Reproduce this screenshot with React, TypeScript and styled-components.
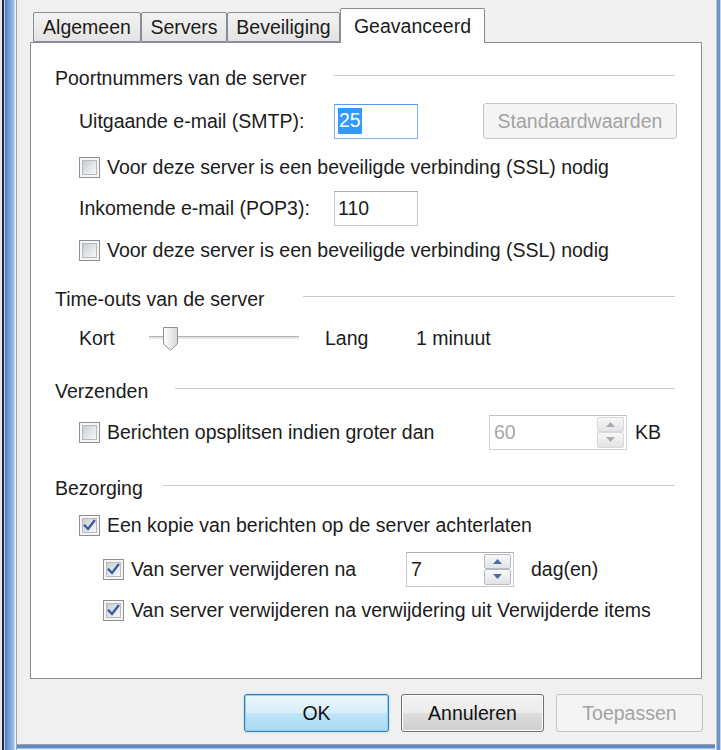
import React from "react";
import styled, { createGlobalStyle } from "styled-components";

const GlobalStyle = createGlobalStyle`
    html, body {
        margin: 0;
        padding: 0;
    }
    body {
        width: 721px;
        height: 750px;
        overflow: hidden;
        background: #f0f0f0;
        font-family: "Liberation Sans", Arial, sans-serif;
    }
`;

const Frame = styled.div`
    display: flex;
    width: 721px;
    height: 750px;
    color: #1b1b1b;
    font-size: 19.5px;
`;

const LeftEdge = styled.div`
    width: 17px;
    flex: none;
    background: linear-gradient(
        to right,
        #e4e8ee 0 2px,
        #23272e 2px 4px,
        #c4d6ee 4px 5px,
        #4f7fc7 5px,
        #a3c1e8 14px,
        #eef2f6 15px 16px,
        #9aa3ad 16px 17px
    );
`;

const RightEdge = styled.div`
    width: 6px;
    flex: none;
    background: linear-gradient(to right, #f7f7f7 0 1px, #b4c0d0 1px 2px, #6f93c8 2px 5px, #c8d6ea 5px);
`;

const Body = styled.div`
    flex: 1;
    display: flex;
    flex-direction: column;
`;

const Dialog = styled.div`
    flex: 1;
    background: #f0f0f0;
    padding: 8px 13px 0;
    display: flex;
    flex-direction: column;
`;

const BottomEdge = styled.div`
    height: 6px;
    flex: none;
    background: linear-gradient(to bottom, #9aa3ad 0 1px, #5f88c6 1px 4px, #a9c2e4 4px 5px, #e6ebf1 5px);
`;

const TabStrip = styled.div`
    display: flex;
    align-items: flex-end;
    height: 34px;
    padding-left: 3px;
    position: relative;
    z-index: 1;
`;

const Tab = styled.div<{ $active?: boolean; $w: number }>`
    width: ${(p) => p.$w}px;
    height: ${(p) => (p.$active ? 35 : 30)}px;
    margin-bottom: ${(p) => (p.$active ? -1 : 0)}px;
    box-sizing: border-box;
    display: flex;
    align-items: center;
    justify-content: center;
    border: 1px solid #898c95;
    border-bottom: ${(p) => (p.$active ? "none" : "1px solid #898c95")};
    border-radius: 2px 2px 0 0;
    background: ${(p) => (p.$active ? "#ffffff" : "linear-gradient(#f3f3f3, #e3e3e3)")};
`;

const Panel = styled.div`
    height: 637px;
    box-sizing: border-box;
    border: 1px solid #898c95;
    background: #ffffff;
    padding: 18px 26px 0 24px;
    display: flex;
    flex-direction: column;
`;

const Row = styled.div<{ $mt?: number; $indent?: number }>`
    display: flex;
    align-items: center;
    height: 34px;
    flex: none;
    margin-top: ${(p) => p.$mt ?? 0}px;
    padding-left: ${(p) => p.$indent ?? 0}px;
    white-space: nowrap;
`;

const HeadingLine = styled.div<{ $gap: number }>`
    flex: 1;
    height: 0;
    border-top: 1px solid #c8cbcf;
    margin-left: ${(p) => p.$gap}px;
    margin-bottom: 6px;
`;

const Label = styled.span<{ $w?: number; $ml?: number }>`
    display: inline-block;
    width: ${(p) => (p.$w ? `${p.$w}px` : "auto")};
    margin-left: ${(p) => p.$ml ?? 0}px;
    flex: none;
`;

const TextBox = styled.div<{ $w: number; $focused?: boolean }>`
    width: ${(p) => p.$w}px;
    height: 35px;
    box-sizing: border-box;
    border: 1px solid ${(p) => (p.$focused ? "#7eb4ea" : "#c5c8cd")};
    border-top-color: ${(p) => (p.$focused ? "#569de5" : "#abadb3")};
    background: #ffffff;
    display: flex;
    align-items: center;
    padding-left: 3px;
`;

const Selected = styled.span`
    background: #3399ff;
    color: #ffffff;
    padding: 1px 1px 2px;
`;

const PushButton = styled.div<{ $w: number; $h?: number; $kind?: "default" | "normal" | "disabled"; $push?: boolean }>`
    width: ${(p) => p.$w}px;
    height: ${(p) => p.$h ?? 38}px;
    margin-left: ${(p) => (p.$push ? "auto" : "0")};
    margin-right: ${(p) => (p.$push ? "-2px" : "0")};
    box-sizing: border-box;
    flex: none;
    display: flex;
    align-items: center;
    justify-content: center;
    border-radius: 3px;
    ${(p) =>
        p.$kind === "disabled"
            ? `
        border: 1px solid #c2c5c8;
        background: #f4f4f4;
        color: #a3a3a3;
    `
            : p.$kind === "default"
              ? `
        border: 1px solid #3c7fb1;
        background: linear-gradient(#e9f5fc 0%, #d8eefb 50%, #bfe5fa 51%, #a9d9f3 100%);
        box-shadow: inset 0 0 0 1px #8fd2f0, 0 0 2px #7fc6ec;
        color: #111;
    `
              : `
        border: 1px solid #707070;
        background: linear-gradient(#f3f3f3 0%, #ebebeb 50%, #dddddd 51%, #cfcfcf 100%);
        box-shadow: inset 0 0 0 1px #fcfcfc;
        color: #111;
    `}
`;

const CheckField = styled.label<{ $w?: number }>`
    display: flex;
    align-items: center;
    gap: 7px;
    flex: none;
    width: ${(p) => (p.$w ? `${p.$w}px` : "auto")};
`;

const Box = styled.span`
    width: 21px;
    height: 21px;
    box-sizing: border-box;
    flex: none;
    border: 1px solid #8e8f8f;
    background: #f6f6f6;
    padding: 2px;
    display: flex;
`;

const BoxFill = styled.span`
    flex: 1;
    position: relative;
    border: 1px solid #b7babe;
    background: linear-gradient(135deg, #c9cdd2 0%, #e6e8ea 60%, #f6f7f8 100%);
`;

const CheckMark = styled.svg`
    position: absolute;
    left: -3px;
    top: -3px;
    width: 19px;
    height: 19px;
`;

const Slider = styled.div`
    position: relative;
    width: 150px;
    height: 34px;
    flex: none;
    display: flex;
    align-items: center;
    margin-right: 26px;
`;

const Track = styled.div`
    width: 100%;
    height: 4px;
    box-sizing: border-box;
    border-top: 1px solid #b3b3b3;
    border-bottom: 1px solid #ffffff;
    background: #e4e6e8;
`;

const Thumb = styled.svg`
    position: absolute;
    left: 14px;
    top: 6px;
    width: 15px;
    height: 24px;
`;

const SpinBox = styled.div<{ $w: number; $disabled?: boolean }>`
    width: ${(p) => p.$w}px;
    height: 35px;
    box-sizing: border-box;
    flex: none;
    border: 1px solid ${(p) => (p.$disabled ? "#cfd1d4" : "#c5c8cd")};
    border-top-color: ${(p) => (p.$disabled ? "#c0c2c6" : "#abadb3")};
    background: #ffffff;
    display: flex;
    padding: 1px 2px 1px 0;
    color: ${(p) => (p.$disabled ? "#a8a8a8" : "#1b1b1b")};
`;

const SpinValue = styled.span`
    flex: 1;
    display: flex;
    align-items: center;
    padding-left: 4px;
`;

const SpinButtons = styled.div`
    width: 27px;
    display: flex;
    flex-direction: column;
`;

const SpinHalf = styled.div<{ $disabled?: boolean }>`
    flex: 1;
    box-sizing: border-box;
    border: 1px solid ${(p) => (p.$disabled ? "#d6d8da" : "#b8bcc1")};
    border-radius: 2px;
    background: linear-gradient(#f8f8f8, #e2e3e5);
    display: flex;
    align-items: center;
    justify-content: center;
`;

const Footer = styled.div`
    display: flex;
    justify-content: flex-end;
    gap: 12px;
    margin-top: 15px;
    margin-right: -1px;
`;

const Check = ({ checked }: { checked?: boolean }): JSX.Element => (
    <Box>
        <BoxFill>
            {checked && (
                <CheckMark viewBox="0 0 19 19">
                    <path
                        d="M4.8 9.6 L8 13 L14.2 5"
                        fill="none"
                        stroke="#3b5ba4"
                        strokeWidth="2.4"
                        strokeLinecap="square"
                    />
                </CheckMark>
            )}
        </BoxFill>
    </Box>
);

const Arrow = ({ up, disabled }: { up?: boolean; disabled?: boolean }): JSX.Element => (
    <svg width="9" height="5" viewBox="0 0 9 5">
        <polygon
            points={up ? "0,5 9,5 4.5,0" : "0,0 9,0 4.5,5"}
            fill={disabled ? "#a9abae" : "#4b6ca6"}
        />
    </svg>
);

const Spinner = (props: { value: string; w: number; disabled?: boolean }): JSX.Element => (
    <SpinBox $w={props.w} $disabled={props.disabled}>
        <SpinValue>{props.value}</SpinValue>
        <SpinButtons>
            <SpinHalf $disabled={props.disabled}>
                <Arrow up disabled={props.disabled} />
            </SpinHalf>
            <SpinHalf $disabled={props.disabled}>
                <Arrow disabled={props.disabled} />
            </SpinHalf>
        </SpinButtons>
    </SpinBox>
);

const App = (): JSX.Element => {
    return (
        <Frame>
            <GlobalStyle />
            <LeftEdge />
            <Body>
                <Dialog>
                    <TabStrip>
                        <Tab $w={108}>Algemeen</Tab>
                        <Tab $w={86}>Servers</Tab>
                        <Tab $w={113}>Beveiliging</Tab>
                        <Tab $w={145} $active>
                            Geavanceerd
                        </Tab>
                    </TabStrip>
                    <Panel>
                        <Row>
                            Poortnummers van de server
                            <HeadingLine $gap={28} />
                        </Row>
                        <Row $mt={9} $indent={24}>
                            <Label $w={255}>Uitgaande e-mail (SMTP):</Label>
                            <TextBox $w={84} $focused>
                                <Selected>25</Selected>
                            </TextBox>
                            <PushButton $w={194} $h={36} $kind="disabled" $push>
                                Standaardwaarden
                            </PushButton>
                        </Row>
                        <Row $mt={12} $indent={24}>
                            <CheckField>
                                <Check />
                                Voor deze server is een beveiligde verbinding (SSL) nodig
                            </CheckField>
                        </Row>
                        <Row $mt={7} $indent={24}>
                            <Label $w={255}>Inkomende e-mail (POP3):</Label>
                            <TextBox $w={84}>110</TextBox>
                        </Row>
                        <Row $mt={8} $indent={24}>
                            <CheckField>
                                <Check />
                                Voor deze server is een beveiligde verbinding (SSL) nodig
                            </CheckField>
                        </Row>

                        <Row $mt={15}>
                            Time-outs van de server
                            <HeadingLine $gap={38} />
                        </Row>
                        <Row $mt={5} $indent={24}>
                            <Label $w={70}>Kort</Label>
                            <Slider>
                                <Track />
                                <Thumb viewBox="0 0 15 24">
                                    <defs>
                                        <linearGradient id="thumbFill" x1="0" y1="0" x2="1" y2="0">
                                            <stop offset="0" stopColor="#ffffff" />
                                            <stop offset="1" stopColor="#d6d8db" />
                                        </linearGradient>
                                    </defs>
                                    <path
                                        d="M0.5 0.5 H14.5 V17 L7.5 23.2 L0.5 17 Z"
                                        fill="url(#thumbFill)"
                                        stroke="#8d9095"
                                    />
                                </Thumb>
                            </Slider>
                            <Label $w={91}>Lang</Label>
                            <Label>1 minuut</Label>
                        </Row>

                        <Row $mt={19}>
                            Verzenden
                            <HeadingLine $gap={27} />
                        </Row>
                        <Row $mt={7} $indent={24}>
                            <CheckField $w={410}>
                                <Check />
                                Berichten opsplitsen indien groter dan
                            </CheckField>
                            <Spinner value="60" w={138} disabled />
                            <Label $ml={8}>KB</Label>
                        </Row>

                        <Row $mt={22}>
                            Bezorging
                            <HeadingLine $gap={20} />
                        </Row>
                        <Row $mt={3} $indent={24}>
                            <CheckField>
                                <Check checked />
                                Een kopie van berichten op de server achterlaten
                            </CheckField>
                        </Row>
                        <Row $mt={10} $indent={48}>
                            <CheckField $w={303}>
                                <Check checked />
                                Van server verwijderen na
                            </CheckField>
                            <Spinner value="7" w={108} />
                            <Label $ml={17}>dag(en)</Label>
                        </Row>
                        <Row $mt={7} $indent={48}>
                            <CheckField>
                                <Check checked />
                                Van server verwijderen na verwijdering uit Verwijderde items
                            </CheckField>
                        </Row>
                    </Panel>
                    <Footer>
                        <PushButton $w={145} $kind="default">
                            OK
                        </PushButton>
                        <PushButton $w={143}>Annuleren</PushButton>
                        <PushButton $w={147} $kind="disabled">
                            Toepassen
                        </PushButton>
                    </Footer>
                </Dialog>
                <BottomEdge />
            </Body>
            <RightEdge />
        </Frame>
    );
};

export default App;
